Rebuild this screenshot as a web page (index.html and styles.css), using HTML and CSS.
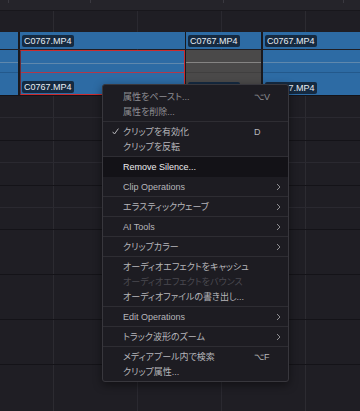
FILE: index.html
```html
<!DOCTYPE html>
<html lang="ja">
<head>
    <meta charset="UTF-8">
    <meta name="viewport" content="width=device-width, initial-scale=1.0">
    <title>Timeline</title>
    <link rel="stylesheet" href="styles.css">
</head>
<body>

    <div class="timeline">
        <div class="ruler"></div>
        <div class="lane-top"></div>

        <!-- pista de video -->
        <div class="track video">
            <div class="clip c-a"></div>
            <div class="clip c-b"><span class="tag">C0767.MP4</span></div>
            <div class="clip c-c"><span class="tag">C0767.MP4</span></div>
            <div class="clip c-d"><span class="tag">C0767.MP4</span></div>
        </div>

        <!-- pista de audio -->
        <div class="track audio">
            <div class="aclip c-a">
                <div class="ch ch-top"></div>
                <div class="ch ch-bottom"></div>
            </div>
            <div class="aclip c-b selected">
                <div class="ch ch-top"></div>
                <div class="ch ch-bottom"><span class="tag">C0767.MP4</span></div>
            </div>
            <div class="aclip c-c muted">
                <div class="ch ch-top"></div>
                <div class="ch ch-bottom"><span class="tag">C0767.MP4</span></div>
            </div>
            <div class="aclip c-d">
                <div class="ch ch-top"></div>
                <div class="ch ch-bottom"><span class="tag">C0767.MP4</span></div>
            </div>
        </div>

        <div class="row split"></div>
        <div class="row split"></div>
        <div class="row split short"></div>
        <div class="row"></div>
        <div class="row"></div>
        <div class="row"></div>
        <div class="row last"></div>

        <!-- menu contextual -->
        <div class="menu">
            <div class="group">
                <div class="item dim"><span class="mark"></span><span class="label">属性をペースト...</span><span class="key">⌥V</span></div>
                <div class="item dim"><span class="mark"></span><span class="label">属性を削除...</span></div>
            </div>
            <div class="group">
                <div class="item">
                    <span class="mark">
                        <svg width="7" height="7" viewBox="0 0 7 7"><path d="M0.6 3.8 L2.5 6 L6.4 0.6" fill="none" stroke="#b8b8bc" stroke-width="1"/></svg>
                    </span>
                    <span class="label">クリップを有効化</span><span class="key">D</span>
                </div>
                <div class="item"><span class="mark"></span><span class="label">クリップを反転</span></div>
            </div>
            <div class="sub hot first"><span class="mark"></span><span class="label">Remove Silence...</span></div>
            <div class="sub flat"><span class="mark"></span><span class="label">Clip Operations</span><svg class="arrow" width="5" height="8" viewBox="0 0 5 8"><path d="M1 1 L4 4 L1 7" fill="none" stroke="#8e8e92" stroke-width="1"/></svg></div>
            <div class="sub"><span class="mark"></span><span class="label">エラスティックウェーブ</span><svg class="arrow" width="5" height="8" viewBox="0 0 5 8"><path d="M1 1 L4 4 L1 7" fill="none" stroke="#8e8e92" stroke-width="1"/></svg></div>
            <div class="sub"><span class="mark"></span><span class="label">AI Tools</span><svg class="arrow" width="5" height="8" viewBox="0 0 5 8"><path d="M1 1 L4 4 L1 7" fill="none" stroke="#8e8e92" stroke-width="1"/></svg></div>
            <div class="sub"><span class="mark"></span><span class="label">クリップカラー</span><svg class="arrow" width="5" height="8" viewBox="0 0 5 8"><path d="M1 1 L4 4 L1 7" fill="none" stroke="#8e8e92" stroke-width="1"/></svg></div>
            <div class="group">
                <div class="item"><span class="mark"></span><span class="label">オーディオエフェクトをキャッシュ</span></div>
                <div class="item off"><span class="mark"></span><span class="label">オーディオエフェクトをバウンス</span></div>
                <div class="item"><span class="mark"></span><span class="label">オーディオファイルの書き出し...</span></div>
            </div>
            <div class="sub"><span class="mark"></span><span class="label">Edit Operations</span><svg class="arrow" width="5" height="8" viewBox="0 0 5 8"><path d="M1 1 L4 4 L1 7" fill="none" stroke="#8e8e92" stroke-width="1"/></svg></div>
            <div class="sub"><span class="mark"></span><span class="label">トラック波形のズーム</span><svg class="arrow" width="5" height="8" viewBox="0 0 5 8"><path d="M1 1 L4 4 L1 7" fill="none" stroke="#8e8e92" stroke-width="1"/></svg></div>
            <div class="group">
                <div class="item"><span class="mark"></span><span class="label">メディアプール内で検索</span><span class="key">⌥F</span></div>
                <div class="item"><span class="mark"></span><span class="label">クリップ属性...</span></div>
            </div>
        </div>
    </div>

</body>
</html>
```

FILE: styles.css
```css
body {
    margin: 0;
    padding: 0;
    background-color: #1f1e24;
    font-family: 'Liberation Sans', 'Noto Sans CJK JP', sans-serif;
}

.timeline {
    position: relative;
    width: 360px;
    height: 411px;
    overflow: hidden;
    background-color: #1f1e24;
    /* lineas verticales de la cuadricula */
    background-image:
        linear-gradient(#2c2b31, #2c2b31),
        linear-gradient(#2a2930, #2a2930),
        linear-gradient(#2a2930, #2a2930),
        linear-gradient(#2c2b31, #2c2b31);
    background-size: 1px 100%;
    background-position: 53px 0, 137px 0, 221px 0, 305px 0;
    background-repeat: no-repeat;
}

.ruler {
    height: 11px;
    border-bottom: 1px solid #18171c;
    box-sizing: border-box;
    background-color: #25242a;
    background-image:
        linear-gradient(#3a3940, #3a3940),
        linear-gradient(#3a3940, #3a3940),
        linear-gradient(#3a3940, #3a3940),
        linear-gradient(#3a3940, #3a3940);
    background-size: 1px 3px;
    background-position: 8px 0, 90px 0, 223px 0, 343px 0;
    background-repeat: no-repeat;
}

.lane-top {
    height: 21px;
}

.track {
    display: flex;
    background-color: #19191e;
}

.track.video {
    height: 17px;
    margin-bottom: 1px;
}

.track.audio {
    height: 45px;
    border-bottom: 1px solid #141318;
}

.c-a { width: 18px; }
.c-b { width: 165px; margin-left: 2px; }
.c-c { width: 75px; margin-left: 1px; }
.c-d { flex: 1; margin-left: 2px; }

.clip {
    display: flex;
    align-items: flex-start;
    background-color: #2d6ba4;
    box-sizing: border-box;
    padding: 3px 0 0 2px;
}

.tag {
    display: block;
    height: 12px;
    line-height: 12px;
    padding: 0 2px;
    border-radius: 2px;
    background-color: #152a41;
    color: #e9eef4;
    font-size: 9px;
}

.aclip {
    display: flex;
    flex-direction: column;
    box-sizing: border-box;
    background-color: #2d6ba4;
}

.ch-top {
    height: 23px;
    border-bottom: 1px solid #23598c;
    box-sizing: border-box;
    background-image: linear-gradient(#5f88ad, #5f88ad);
    background-size: 100% 1px;
    background-position: 0 12px;
    background-repeat: no-repeat;
}

.ch-bottom {
    flex: 1;
    display: flex;
    align-items: flex-end;
    padding: 0 0 1px 2px;
}

.aclip.selected {
    border: 1px solid #cc2b2e;
    border-left-color: #6b2a36;
}

.aclip.selected .ch-top {
    height: 22px;
    border-bottom-color: #b2384a;
}

.aclip.selected .ch-bottom {
    padding-left: 1px;
}

.aclip.muted {
    background-color: #4a4949;
}

.aclip.muted .ch-top {
    border-bottom-color: #403f3f;
    background-image: linear-gradient(#858483, #858483);
}

.row {
    height: 45px;
    border-bottom: 1px solid #141318;
    box-sizing: border-box;
}

.row.split {
    background-image: linear-gradient(#2a2930, #2a2930);
    background-size: 100% 1px;
    background-position: 0 21px;
    background-repeat: no-repeat;
}

.row.short {
    height: 44px;
}

.row.last {
    border-bottom: none;
}

/* menu contextual */
.menu {
    position: absolute;
    left: 102px;
    top: 84px;
    width: 187px;
    box-sizing: border-box;
    border: 1px solid #38373d;
    border-radius: 3px;
    background-color: #1d1c22;
    box-shadow: 0 3px 10px rgba(0, 0, 0, 0.45);
    font-size: 9px;
    font-feature-settings: "palt";
    color: #b6b6ba;
}

.group {
    padding: 2px 0;
    border-top: 1px solid #2e2d33;
}

.group:first-child {
    padding-top: 4px;
    border-top: none;
}

.item,
.sub {
    display: flex;
    align-items: center;
    padding: 0 7px 0 9px;
    white-space: nowrap;
}

.item {
    height: 15px;
}

.sub {
    height: 19px;
    border-top: 1px solid #2e2d33;
}

.sub.first {
    height: 20px;
}

.sub.flat {
    border-top: none;
}

.sub.hot {
    background-color: #131217;
    color: #ececee;
}

.mark {
    width: 11px;
    display: flex;
    align-items: center;
}

.label {
    flex: 1;
}

.key {
    width: 27px;
}

.arrow {
    display: block;
}

.item.dim {
    color: #8e8e93;
}

.item.off {
    color: #4a4950;
}
```
